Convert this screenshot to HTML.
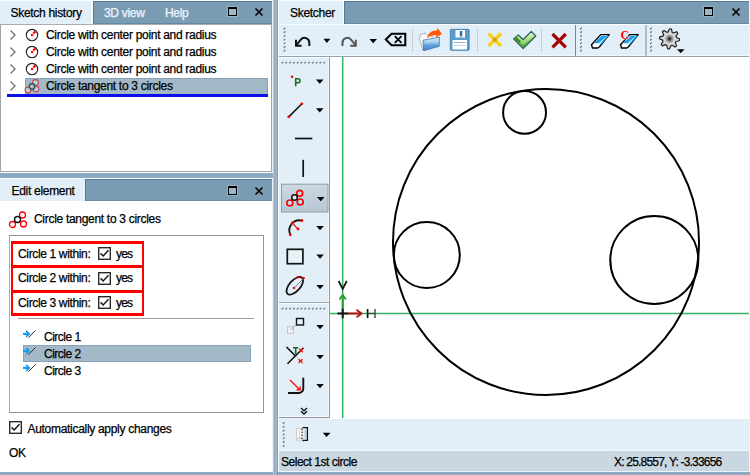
<!DOCTYPE html>
<html><head><meta charset="utf-8">
<style>
*{box-sizing:border-box;margin:0;padding:0}
html,body{width:750px;height:475px;overflow:hidden}
body{background:#8eaac2;font-family:"Liberation Sans",sans-serif;font-size:12px;color:#000;position:relative}
.a{position:absolute}
.t{position:absolute;white-space:nowrap;letter-spacing:-0.3px;line-height:14px;-webkit-text-stroke:0.25px currentColor}
.lt{background:#e3eff8}
.tb{background:#7a9cb3;border-top:1px solid #517b9a;border-bottom:1px solid #6389a6}
.wt{color:#eef4fa}
.dd{position:absolute;width:0;height:0;border-left:4px solid transparent;border-right:4px solid transparent;border-top:4px solid #000}
.grip{position:absolute;background-image:radial-gradient(circle,#7d8894 0.8px,transparent 1.2px)}
</style></head><body>

<!-- ============ LEFT TOP: Sketch history ============ -->
<div class="a" style="left:0;top:0;width:273px;height:1px;background:#fbfdfe"></div>
<div class="a lt" style="left:0;top:1px;width:91px;height:23px"></div>
<div class="a" style="left:91px;top:1px;width:2px;height:23px;background:#fafcfe"></div>
<div class="a tb" style="left:93px;top:1px;width:179px;height:22.5px;border-left:1px solid #517b9a"></div>
<div class="t" style="left:10.5px;top:6px">Sketch history</div>
<div class="t wt" style="left:104px;top:6px">3D view</div>
<div class="t wt" style="left:165px;top:6px">Help</div>
<!-- max / close -->
<div class="a" style="left:228px;top:7px;width:9px;height:9px;border:1.5px solid #000;border-top-width:2.5px;background:#9fb7ca;box-shadow:0 0 0 1px rgba(200,225,240,0.35)"></div>
<svg class="a" style="left:254px;top:7px" width="10" height="10"><path d="M1.5 1.5L8.5 8.5M8.5 1.5L1.5 8.5" stroke="#000" stroke-width="1.6"/></svg>

<div class="a" style="left:0;top:24px;width:272px;height:148px;background:#fff;border:1px solid #a3a3a3;border-top-color:#a9acb0"></div>
<!-- rows -->
<svg class="a" style="left:7.5px;top:29px" width="9" height="12"><path d="M2.5 1.5L7 6L2.5 10.5" fill="none" stroke="#707070" stroke-width="1.3"/></svg>
<svg class="a" style="left:24px;top:27px" width="16" height="16"><circle cx="8" cy="8" r="5.7" fill="none" stroke="#2a2a2a" stroke-width="1.15"/><rect x="7" y="7" width="2.1" height="2.1" fill="#f00"/><path d="M9.3 6.6L11.3 4.5" stroke="#f00" stroke-width="2.2"/></svg>
<div class="t" style="left:46px;top:28px">Circle with center point and radius</div>
<svg class="a" style="left:7.5px;top:46px" width="9" height="12"><path d="M2.5 1.5L7 6L2.5 10.5" fill="none" stroke="#707070" stroke-width="1.3"/></svg>
<svg class="a" style="left:24px;top:44px" width="16" height="16"><circle cx="8" cy="8" r="5.7" fill="none" stroke="#2a2a2a" stroke-width="1.15"/><rect x="7" y="7" width="2.1" height="2.1" fill="#f00"/><path d="M9.3 6.6L11.3 4.5" stroke="#f00" stroke-width="2.2"/></svg>
<div class="t" style="left:46px;top:45px">Circle with center point and radius</div>
<svg class="a" style="left:7.5px;top:63px" width="9" height="12"><path d="M2.5 1.5L7 6L2.5 10.5" fill="none" stroke="#707070" stroke-width="1.3"/></svg>
<svg class="a" style="left:24px;top:61px" width="16" height="16"><circle cx="8" cy="8" r="5.7" fill="none" stroke="#2a2a2a" stroke-width="1.15"/><rect x="7" y="7" width="2.1" height="2.1" fill="#f00"/><path d="M9.3 6.6L11.3 4.5" stroke="#f00" stroke-width="2.2"/></svg>
<div class="t" style="left:46px;top:62px">Circle with center point and radius</div>
<div class="a" style="left:25px;top:78px;width:243px;height:15.5px;background:#a3b9c7;border:1px solid #86a2b9;border-bottom:none"></div>
<div class="a" style="left:6.5px;top:93.5px;width:261.5px;height:3px;background:#0a10e8"></div>
<svg class="a" style="left:7.5px;top:80px" width="9" height="12"><path d="M2.5 1.5L7 6L2.5 10.5" fill="none" stroke="#707070" stroke-width="1.3"/></svg>
<svg class="a" style="left:24px;top:78px" width="16" height="16"><circle cx="11.5" cy="4.5" r="2.9" fill="#b9d3e0" stroke="#c84848" stroke-width="1.1"/><circle cx="4" cy="12" r="2.9" fill="#b9d3e0" stroke="#c84848" stroke-width="1.1"/><circle cx="12" cy="11" r="2.9" fill="#b9d3e0" stroke="#c84848" stroke-width="1.1"/><circle cx="8" cy="8.5" r="2.7" fill="#b8c4cc" stroke="#2d5062" stroke-width="1.4"/></svg>
<div class="t" style="left:46px;top:79px">Circle tangent to 3 circles</div>

<!-- gap -->
<div class="a" style="left:0;top:172px;width:273px;height:1px;background:#fdfeff"></div>

<!-- ============ LEFT BOTTOM: Edit element ============ -->
<div class="a" style="left:0;top:178px;width:273px;height:1px;background:#fdfeff"></div>
<div class="a lt" style="left:0;top:179px;width:85px;height:22px"></div>
<div class="a tb" style="left:85px;top:179px;width:187px;height:22px;border-left:1px solid #517b9a"></div>
<div class="t" style="left:11.5px;top:184px">Edit element</div>
<div class="a" style="left:228px;top:186px;width:9px;height:9px;border:1.5px solid #000;border-top-width:2.5px;background:#9fb7ca;box-shadow:0 0 0 1px rgba(200,225,240,0.35)"></div>
<svg class="a" style="left:254px;top:186px" width="10" height="10"><path d="M1.5 1.5L8.5 8.5M8.5 1.5L1.5 8.5" stroke="#000" stroke-width="1.6"/></svg>
<div class="a" style="left:0;top:201px;width:273px;height:271px;background:#fff"></div>

<svg class="a" style="left:8px;top:209px" width="20" height="20"><circle cx="14.5" cy="6" r="3" fill="#fff" stroke="#f00" stroke-width="1.3"/><circle cx="4.5" cy="15.5" r="3" fill="#fff" stroke="#f00" stroke-width="1.3"/><circle cx="15.5" cy="15" r="3" fill="#fff" stroke="#f00" stroke-width="1.3"/><circle cx="9.5" cy="10.5" r="3" fill="#fff" stroke="#111" stroke-width="1.4"/></svg>
<div class="t" style="left:34px;top:212px">Circle tangent to 3 circles</div>
<div class="a" style="left:9px;top:235px;width:255px;height:178px;border:1px solid #8d949a;border-left-color:#9fb0bc"></div>
<div class="a" style="left:10.5px;top:241px;width:133.5px;height:2.5px;background:#ff0000"></div>
<div class="a" style="left:10.5px;top:265px;width:133.5px;height:3px;background:#ff0000"></div>
<div class="a" style="left:10.5px;top:290px;width:133.5px;height:3px;background:#ff0000"></div>
<div class="a" style="left:10.5px;top:313px;width:133.5px;height:2.5px;background:#ff0000"></div>
<div class="a" style="left:10.5px;top:241px;width:2.2px;height:74.5px;background:#ff0000"></div>
<div class="a" style="left:141.5px;top:241px;width:2.5px;height:74.5px;background:#ff0000"></div>
<div class="t" style="left:18px;top:246.7px;letter-spacing:-0.35px">Circle 1 within:</div>
<svg class="a" style="left:98px;top:247px" width="13" height="13"><rect x="0.7" y="0.7" width="11.6" height="11.6" fill="#fff" stroke="#2a2a2a" stroke-width="1.4"/><path d="M2.6 6.4L5.2 9L10.4 3.2" fill="none" stroke="#1a1a1a" stroke-width="1.5"/></svg>
<div class="t" style="left:116px;top:246.7px;letter-spacing:-0.8px">yes</div>
<div class="t" style="left:18px;top:271.2px;letter-spacing:-0.35px">Circle 2 within:</div>
<svg class="a" style="left:98px;top:271.5px" width="13" height="13"><rect x="0.7" y="0.7" width="11.6" height="11.6" fill="#fff" stroke="#2a2a2a" stroke-width="1.4"/><path d="M2.6 6.4L5.2 9L10.4 3.2" fill="none" stroke="#1a1a1a" stroke-width="1.5"/></svg>
<div class="t" style="left:116px;top:271.2px;letter-spacing:-0.8px">yes</div>
<div class="t" style="left:18px;top:296px;letter-spacing:-0.35px">Circle 3 within:</div>
<svg class="a" style="left:98px;top:296.3px" width="13" height="13"><rect x="0.7" y="0.7" width="11.6" height="11.6" fill="#fff" stroke="#2a2a2a" stroke-width="1.4"/><path d="M2.6 6.4L5.2 9L10.4 3.2" fill="none" stroke="#1a1a1a" stroke-width="1.5"/></svg>
<div class="t" style="left:116px;top:296px;letter-spacing:-0.8px">yes</div>
<div class="a" style="left:18px;top:318px;width:236px;height:1px;background:#a0a0a0"></div>
<div class="a" style="left:23px;top:345.3px;width:227.5px;height:16.7px;background:#a3b9c7;border:1px solid #86a2b9"></div>
<svg class="a" style="left:22px;top:329px" width="15" height="10"><path d="M1 4.9H6.5" stroke="#1e9af0" stroke-width="2.2"/><path d="M4.2 2L7.2 4.9L4.2 7.8" fill="none" stroke="#1e9af0" stroke-width="1.8"/><path d="M6.5 8.7L13.5 1.4" stroke="#333" stroke-width="1"/></svg>
<div class="t" style="left:44px;top:330px;letter-spacing:-0.5px">Circle 1</div>
<svg class="a" style="left:22px;top:346px" width="15" height="10"><path d="M1 4.9H6.5" stroke="#1e9af0" stroke-width="2.2"/><path d="M4.2 2L7.2 4.9L4.2 7.8" fill="none" stroke="#1e9af0" stroke-width="1.8"/><path d="M6.5 8.7L13.5 1.4" stroke="#333" stroke-width="1"/></svg>
<div class="t" style="left:44px;top:347px;letter-spacing:-0.5px">Circle 2</div>
<svg class="a" style="left:22px;top:363px" width="15" height="10"><path d="M1 4.9H6.5" stroke="#1e9af0" stroke-width="2.2"/><path d="M4.2 2L7.2 4.9L4.2 7.8" fill="none" stroke="#1e9af0" stroke-width="1.8"/><path d="M6.5 8.7L13.5 1.4" stroke="#333" stroke-width="1"/></svg>
<div class="t" style="left:44px;top:364px;letter-spacing:-0.5px">Circle 3</div>
<svg class="a" style="left:9px;top:421px" width="13" height="13"><rect x="0.7" y="0.7" width="11.6" height="11.6" fill="#fff" stroke="#2a2a2a" stroke-width="1.4"/><path d="M2.6 6.4L5.2 9L10.4 3.2" fill="none" stroke="#1a1a1a" stroke-width="1.5"/></svg>
<div class="t" style="left:27.5px;top:422px">Automatically apply changes</div>
<div class="t" style="left:9px;top:446px">OK</div>

<!-- ============ RIGHT: Sketcher ============ -->
<div class="a" style="left:272px;top:0;width:1px;height:172px;background:#f0ebe8"></div>
<div class="a" style="left:272px;top:179px;width:1px;height:293px;background:#f4f1ef"></div>
<div class="a" style="left:273px;top:0;width:1px;height:475px;background:#b9cde0"></div>
<div class="a" style="left:274px;top:0;width:1px;height:475px;background:#8aa9c5"></div>
<div class="a" style="left:275px;top:0;width:2px;height:475px;background:#a1b7c7"></div>
<div class="a" style="left:277px;top:0;width:1px;height:475px;background:#7f9db8"></div>
<div class="a" style="left:278px;top:0;width:1px;height:472px;background:#fbfcfd"></div>
<div class="a" style="left:279px;top:0;width:470px;height:1px;background:#fbfdfe"></div>
<div class="a lt" style="left:279px;top:1px;width:64px;height:23px"></div>
<div class="a" style="left:343px;top:1px;width:1.3px;height:23px;background:#fbfdfe"></div>
<div class="a tb" style="left:344.3px;top:1px;width:404.7px;height:22.5px;border-left:1px solid #517b9a"></div>
<div class="t" style="left:290px;top:6px">Sketcher</div>
<div class="a" style="left:704px;top:7px;width:9px;height:9px;border:1.5px solid #000;border-top-width:2.5px;background:#9fb7ca;box-shadow:0 0 0 1px rgba(200,225,240,0.35)"></div>
<svg class="a" style="left:731px;top:7px" width="10" height="10"><path d="M1.5 1.5L8.5 8.5M8.5 1.5L1.5 8.5" stroke="#000" stroke-width="1.6"/></svg>
<div class="a" style="left:279px;top:23.5px;width:470px;height:1.5px;background:#fbfdfe"></div>
<!-- top toolbar -->
<div class="a lt" style="left:279px;top:25px;width:470px;height:32px;border-bottom:1px solid #9aa4ad;box-shadow:inset 0 -1px 0 #f3f7fa"></div>
<!-- vertical toolbar -->
<div class="a lt" style="left:279px;top:57px;width:51px;height:361px;border-top:1px solid #fbfdfe;border-right:1px solid #8f99a3;border-bottom:1px solid #8f99a3;box-shadow:inset -1px -1px 0 #f7fafc"></div>
<!-- canvas -->
<div class="a" style="left:330px;top:57px;width:419px;height:362px;background:#fff"></div>
<!-- bottom toolbar -->
<div class="a lt" style="left:279px;top:418px;width:51px;height:1px;background:#eef4f9"></div><div class="a lt" style="left:279px;top:419px;width:470px;height:32px"></div>
<!-- status -->
<div class="a" style="left:279px;top:451px;width:470px;height:20px;background:#c9d7e2"></div>
<div class="a" style="left:279px;top:470.5px;width:471px;height:1.5px;background:#eef3f7"></div>
<div class="t" style="left:281px;top:455px;letter-spacing:-0.48px">Select 1st circle</div>
<div class="a" style="left:749px;top:0;width:1px;height:472px;background:#f1f5f9"></div>
<div class="a" style="left:279px;top:450.3px;width:470px;height:1.2px;background:#f2f6f9"></div>
<div class="a" style="left:609px;top:452px;width:1px;height:18px;background:#dcd8d8"></div>
<div class="a" style="left:358px;top:452px;width:1px;height:18px;background:#dcd8d8"></div>
<div class="t" style="left:614px;top:455px;letter-spacing:-0.8px">X: 25.8557, Y: -3.33656</div>

<svg class="a" style="left:330px;top:57px" width="419" height="362" viewBox="330 57 419 362">
<line x1="342.7" y1="57" x2="342.7" y2="418" stroke="#35b366" stroke-width="1.5"/>
<line x1="330" y1="313.5" x2="749" y2="313.5" stroke="#35b366" stroke-width="1.5"/>
<g fill="none" stroke="#000" stroke-width="2">
<circle cx="546" cy="242" r="153"/>
<circle cx="524.55" cy="112.4" r="21.45"/>
<circle cx="426.8" cy="255" r="33"/>
<circle cx="654.3" cy="260" r="44"/>
</g>
<line x1="342.7" y1="296" x2="342.7" y2="310" stroke="#1a9e2a" stroke-width="2"/>
<path d="M339.5 299.5L342.7 294.8L345.9 299.5" fill="none" stroke="#1a9e2a" stroke-width="1.8"/>
<path d="M338.6 281L342.7 289L346.8 281" fill="none" stroke="#111" stroke-width="1.7"/>
<line x1="337.5" y1="313.5" x2="348" y2="313.5" stroke="#111" stroke-width="2"/>
<line x1="342.7" y1="308.8" x2="342.7" y2="318.2" stroke="#111" stroke-width="2"/>
<line x1="348" y1="313.5" x2="361" y2="313.5" stroke="#b01515" stroke-width="2"/>
<path d="M356.5 309.8L361.5 313.5L356.5 317.2" fill="none" stroke="#b01515" stroke-width="1.8"/>
<line x1="367.6" y1="309" x2="367.6" y2="318" stroke="#111" stroke-width="1.7"/>
<line x1="375" y1="309" x2="375" y2="318" stroke="#444" stroke-width="1.4"/>
<line x1="367.6" y1="313.5" x2="375" y2="313.5" stroke="#444" stroke-width="1.2"/>
</svg>
<svg class="a" style="left:279px;top:25px" width="470" height="31" viewBox="279 25 470 31">
<path d="M284.05 28.95L284.95 28.05" stroke="#6f7a86" stroke-width="1.3" stroke-linecap="round"/><path d="M284.05 32.65L284.95 31.75" stroke="#6f7a86" stroke-width="1.3" stroke-linecap="round"/><path d="M284.05 36.35L284.95 35.45" stroke="#6f7a86" stroke-width="1.3" stroke-linecap="round"/><path d="M284.05 40.05L284.95 39.15" stroke="#6f7a86" stroke-width="1.3" stroke-linecap="round"/><path d="M284.05 43.75L284.95 42.85" stroke="#6f7a86" stroke-width="1.3" stroke-linecap="round"/><path d="M284.05 47.45L284.95 46.55" stroke="#6f7a86" stroke-width="1.3" stroke-linecap="round"/><path d="M284.05 51.15L284.95 50.25" stroke="#6f7a86" stroke-width="1.3" stroke-linecap="round"/>
<path d="M309.3 46V42.8A4.8 4.8 0 0 0 300.8 39.6L296.5 45" fill="none" stroke="#111" stroke-width="2"/>
<path d="M296 39.8V45.7H301.6" fill="none" stroke="#111" stroke-width="2"/>
<path d="M323.5 38.7H330.3L326.9 42.9Z" fill="#000"/>
<path d="M342.5 46V42.8A4.8 4.8 0 0 1 351 39.6L355.3 45" fill="none" stroke="#555" stroke-width="2"/>
<path d="M355.8 39.8V45.7H350.2" fill="none" stroke="#555" stroke-width="2"/>
<path d="M369.5 39H377L373.2 43.2Z" fill="#000"/>
<path d="M385.8 39.5L391.6 33.8H405.3V45.3H391.6Z" fill="none" stroke="#000" stroke-width="2" stroke-linejoin="miter"/>
<path d="M394.8 36.2L401.5 42.9M401.5 36.2L394.8 42.9" stroke="#000" stroke-width="1.8"/>
<line x1="412.5" y1="29" x2="412.5" y2="52" stroke="#c9ced3" stroke-width="1"/>
<!-- folder -->
<defs><linearGradient id="fg" x1="0" y1="0" x2="0" y2="1"><stop offset="0" stop-color="#d6f0fa"/><stop offset="0.35" stop-color="#a9d2ee"/><stop offset="0.6" stop-color="#5d9fdc"/><stop offset="1" stop-color="#3a86d0"/></linearGradient>
<linearGradient id="sg" x1="0" y1="0" x2="0" y2="1"><stop offset="0" stop-color="#d8f5b8"/><stop offset="0.4" stop-color="#8fd45a"/><stop offset="1" stop-color="#3a9e2a"/></linearGradient></defs>
<path d="M422.8 50L419.3 38.2L420.6 34.3L425.6 33.3L427.8 35.6L432 35L432 40Z" fill="#f6f9fc" stroke="#6a7580" stroke-width="0.8" stroke-dasharray="1.2 0.8"/>
<path d="M423 40.2L439.6 37.2L439.2 46.3L423.6 50.8Z" fill="url(#fg)" stroke="#2f6aa8" stroke-width="0.7"/>
<path d="M427.3 38.3C428.2 33.2 431.2 30.6 436.8 30.6L437.6 28L441.9 34L436 37.8L436.3 35C432.2 35 429.6 36.2 427.3 38.3Z" fill="#ff5a0a"/>
<!-- save -->
<rect x="450.3" y="29.3" width="18.8" height="21" rx="1" fill="#5b9ccc" stroke="#3a80b5" stroke-width="0.9"/>
<rect x="455.5" y="30" width="9.5" height="7.5" fill="#fff"/>
<rect x="459.8" y="31" width="2.5" height="5.5" fill="#2d6ea8"/>
<rect x="452.5" y="40" width="14.5" height="9.5" fill="#fff"/>
<line x1="454" y1="42.5" x2="465.5" y2="42.5" stroke="#8dbbe0" stroke-width="1"/>
<line x1="454" y1="45.5" x2="465.5" y2="45.5" stroke="#c5d9ea" stroke-width="1"/>
<line x1="477.5" y1="29" x2="477.5" y2="52" stroke="#c9ced3" stroke-width="1"/>
<!-- yellow x -->
<path d="M488.5 33.5L501 46M501 33.5L488.5 46" stroke="#f5d21c" stroke-width="3.6"/>
<circle cx="494.8" cy="39.8" r="2.2" fill="#e39a1a"/>
<!-- check -->
<path d="M513.5 38.8L518.3 34.8L523.2 39.5L531.3 31.3L535.8 36L523.2 48.6Z" fill="url(#sg)" stroke="#2f5866" stroke-width="1.1" stroke-linejoin="round"/>
<path d="M515 38.8L518.3 36.2L523.2 41L531.3 32.8L534 35.8L523.2 44.5Z" fill="#ffffff" opacity="0.35"/>
<path d="M514.5 39L517 37L521 41.5L519.5 43Z" fill="#157a15" opacity="0.8"/>
<line x1="541.5" y1="29" x2="541.5" y2="52" stroke="#c9ced3" stroke-width="1"/>
<!-- red x -->
<path d="M552.5 34L565.8 47.3M565.8 34L552.5 47.3" stroke="#a60000" stroke-width="3.2"/>
<line x1="575.5" y1="25" x2="575.5" y2="56" stroke="#7f8890" stroke-width="1"/>
<path d="M580.55 28.95L581.45 28.05" stroke="#6f7a86" stroke-width="1.3" stroke-linecap="round"/><path d="M580.55 32.65L581.45 31.75" stroke="#6f7a86" stroke-width="1.3" stroke-linecap="round"/><path d="M580.55 36.35L581.45 35.45" stroke="#6f7a86" stroke-width="1.3" stroke-linecap="round"/><path d="M580.55 40.05L581.45 39.15" stroke="#6f7a86" stroke-width="1.3" stroke-linecap="round"/><path d="M580.55 43.75L581.45 42.85" stroke="#6f7a86" stroke-width="1.3" stroke-linecap="round"/><path d="M580.55 47.45L581.45 46.55" stroke="#6f7a86" stroke-width="1.3" stroke-linecap="round"/><path d="M580.55 51.15L581.45 50.25" stroke="#6f7a86" stroke-width="1.3" stroke-linecap="round"/>
<!-- eraser 1 -->
<path d="M591.5 44.8L600.8 34.6H609.2L599.5 46.8L597.8 48H592.5Z" fill="#fff" stroke="#000" stroke-width="1.4" stroke-linejoin="round"/>
<path d="M593.8 43.2L601.8 35.8H607L598.8 43.2Z" fill="#1aa0ea"/>
<path d="M600.2 44.6L608.2 35.6" stroke="#1aa0ea" stroke-width="1.4"/>
<!-- eraser 2 -->
<path d="M620.5 44.8L629.8 34.6H638.2L628.5 46.8L626.8 48H621.5Z" fill="#fff" stroke="#000" stroke-width="1.4" stroke-linejoin="round"/>
<path d="M622.8 43.2L630.8 35.8H636L627.8 43.2Z" fill="#1aa0ea"/>
<path d="M629.2 44.6L637.2 35.6" stroke="#1aa0ea" stroke-width="1.4"/>

<text x="620.6" y="39.3" font-family="Liberation Serif" font-weight="bold" font-size="12" fill="#f00" stroke="#fff" stroke-width="0.6" paint-order="stroke">C</text>
<line x1="646" y1="25" x2="646" y2="56" stroke="#7f8890" stroke-width="1"/>
<path d="M650.55 28.95L651.45 28.05" stroke="#6f7a86" stroke-width="1.3" stroke-linecap="round"/><path d="M650.55 32.65L651.45 31.75" stroke="#6f7a86" stroke-width="1.3" stroke-linecap="round"/><path d="M650.55 36.35L651.45 35.45" stroke="#6f7a86" stroke-width="1.3" stroke-linecap="round"/><path d="M650.55 40.05L651.45 39.15" stroke="#6f7a86" stroke-width="1.3" stroke-linecap="round"/><path d="M650.55 43.75L651.45 42.85" stroke="#6f7a86" stroke-width="1.3" stroke-linecap="round"/><path d="M650.55 47.45L651.45 46.55" stroke="#6f7a86" stroke-width="1.3" stroke-linecap="round"/><path d="M650.55 51.15L651.45 50.25" stroke="#6f7a86" stroke-width="1.3" stroke-linecap="round"/>
<path d="M669.50 28.80L671.45 28.99L672.18 32.33L673.39 32.98L676.57 31.73L677.81 33.24L675.97 36.12L676.37 37.43L679.50 38.80L679.31 40.75L675.97 41.48L675.32 42.69L676.57 45.87L675.06 47.11L672.18 45.27L670.87 45.67L669.50 48.80L667.55 48.61L666.82 45.27L665.61 44.62L662.43 45.87L661.19 44.36L663.03 41.48L662.63 40.17L659.50 38.80L659.69 36.85L663.03 36.12L663.68 34.91L662.43 31.73L663.94 30.49L666.82 32.33L668.13 31.93Z" fill="#d8d8d8" stroke="#222" stroke-width="1.2" stroke-linejoin="round"/>
<circle cx="669.5" cy="38.8" r="4" fill="#9a9a9a"/>
<circle cx="669.5" cy="38.8" r="2" fill="#3a3a3a"/>
<path d="M677 49.2H684.5L680.7 53.2Z" fill="#000"/>
</svg>
<svg class="a" style="left:279px;top:56px" width="51" height="395" viewBox="279 56 51 395">
<path d="M282.05 63.05L282.95 62.15" stroke="#6f7a86" stroke-width="1.3" stroke-linecap="round"/><path d="M285.85 63.05L286.75 62.15" stroke="#6f7a86" stroke-width="1.3" stroke-linecap="round"/><path d="M289.65 63.05L290.55 62.15" stroke="#6f7a86" stroke-width="1.3" stroke-linecap="round"/><path d="M293.45 63.05L294.35 62.15" stroke="#6f7a86" stroke-width="1.3" stroke-linecap="round"/><path d="M297.25 63.05L298.15 62.15" stroke="#6f7a86" stroke-width="1.3" stroke-linecap="round"/><path d="M301.05 63.05L301.95 62.15" stroke="#6f7a86" stroke-width="1.3" stroke-linecap="round"/><path d="M304.85 63.05L305.75 62.15" stroke="#6f7a86" stroke-width="1.3" stroke-linecap="round"/><path d="M308.65 63.05L309.55 62.15" stroke="#6f7a86" stroke-width="1.3" stroke-linecap="round"/><path d="M312.45 63.05L313.35 62.15" stroke="#6f7a86" stroke-width="1.3" stroke-linecap="round"/><path d="M316.25 63.05L317.15 62.15" stroke="#6f7a86" stroke-width="1.3" stroke-linecap="round"/><path d="M320.05 63.05L320.95 62.15" stroke="#6f7a86" stroke-width="1.3" stroke-linecap="round"/><path d="M323.85 63.05L324.75 62.15" stroke="#6f7a86" stroke-width="1.3" stroke-linecap="round"/>
<circle cx="292.1" cy="76.8" r="1.3" fill="#f00"/>
<path d="M295.7 86.3V78.8H298A2 2 0 0 1 298 82.8H295.7" fill="none" stroke="#1b701b" stroke-width="1.6"/>
<path d="M316 79.5H323.5L319.75 83.7Z" fill="#000"/>
<line x1="282" y1="96.5" x2="327" y2="96.5" stroke="#dbe4ec" stroke-width="0.8" stroke-dasharray="2 2.5"/>
<line x1="289" y1="116.6" x2="301.6" y2="104" stroke="#111" stroke-width="1.5"/>
<circle cx="288.7" cy="116.8" r="1.4" fill="#f00"/><circle cx="301.9" cy="103.8" r="1.4" fill="#f00"/>
<path d="M316 108.3H323.5L319.75 112.5Z" fill="#000"/>
<line x1="295" y1="138.5" x2="312.3" y2="138.5" stroke="#111" stroke-width="1.7"/>
<line x1="303.2" y1="159.8" x2="303.2" y2="177" stroke="#111" stroke-width="1.7"/>
<!-- selected button -->
<defs><linearGradient id="bg1" x1="0" y1="0" x2="0" y2="1"><stop offset="0" stop-color="#cdd9e3"/><stop offset="1" stop-color="#b6c6d3"/></linearGradient></defs>
<rect x="281.5" y="184.2" width="46.5" height="27.8" fill="url(#bg1)" stroke="#8f9ba6" stroke-width="1"/>
<g fill="none" stroke="#9ff0f8" stroke-width="3.4"><circle cx="299.7" cy="193.3" r="3"/><circle cx="289.8" cy="203" r="3"/><circle cx="300.2" cy="202" r="3"/></g>
<circle cx="299.7" cy="193.3" r="3" fill="#b7dfe8" stroke="#f00" stroke-width="1.7"/>
<circle cx="289.8" cy="203" r="3" fill="#b7dfe8" stroke="#f00" stroke-width="1.7"/>
<circle cx="300.2" cy="202" r="3" fill="#b7dfe8" stroke="#f00" stroke-width="1.7"/>
<circle cx="294.5" cy="197.5" r="2.8" fill="#e8eef2" stroke="#111" stroke-width="1.5"/>
<path d="M317 197H324.5L320.75 201.2Z" fill="#000"/>
<!-- arc -->
<path d="M290.3 234.5A10 10 0 0 1 301.8 220.6" fill="none" stroke="#111" stroke-width="1.8"/>
<circle cx="290.3" cy="234.8" r="1.4" fill="#f00"/><circle cx="301.9" cy="220.5" r="1.5" fill="#f00"/><circle cx="298" cy="229" r="1.4" fill="#f00"/>
<path d="M298 229L291.8 222.6M291.5 225.5V222.4H294.6" fill="none" stroke="#f00" stroke-width="1.1"/>
<path d="M316.3 226H323.8L320.05 230.2Z" fill="#000"/>
<rect x="287.3" y="249.3" width="15.6" height="14.4" fill="#e8f1f8" stroke="#111" stroke-width="1.7"/>
<path d="M316.3 254.5H323.8L320.05 258.7Z" fill="#000"/>
<!-- ellipse -->
<ellipse cx="294.8" cy="285.8" rx="10.8" ry="5.4" transform="rotate(-48 294.8 285.8)" fill="none" stroke="#111" stroke-width="1.7"/>
<line x1="294" y1="288" x2="303" y2="279" stroke="#666" stroke-width="0.8"/>
<circle cx="297.8" cy="277.3" r="1.3" fill="#f00"/><circle cx="303.6" cy="278" r="1.3" fill="#f00"/><circle cx="294" cy="288" r="1.3" fill="#f00"/>
<path d="M316.3 285H323.8L320.05 289.2Z" fill="#000"/>
<line x1="279" y1="302.5" x2="329" y2="302.5" stroke="#9ea9b3" stroke-width="1"/>
<line x1="279" y1="303.5" x2="329" y2="303.5" stroke="#f5f8fb" stroke-width="1"/>
<path d="M282.05 309.05L282.95 308.15" stroke="#6f7a86" stroke-width="1.3" stroke-linecap="round"/><path d="M285.85 309.05L286.75 308.15" stroke="#6f7a86" stroke-width="1.3" stroke-linecap="round"/><path d="M289.65 309.05L290.55 308.15" stroke="#6f7a86" stroke-width="1.3" stroke-linecap="round"/><path d="M293.45 309.05L294.35 308.15" stroke="#6f7a86" stroke-width="1.3" stroke-linecap="round"/><path d="M297.25 309.05L298.15 308.15" stroke="#6f7a86" stroke-width="1.3" stroke-linecap="round"/><path d="M301.05 309.05L301.95 308.15" stroke="#6f7a86" stroke-width="1.3" stroke-linecap="round"/><path d="M304.85 309.05L305.75 308.15" stroke="#6f7a86" stroke-width="1.3" stroke-linecap="round"/><path d="M308.65 309.05L309.55 308.15" stroke="#6f7a86" stroke-width="1.3" stroke-linecap="round"/><path d="M312.45 309.05L313.35 308.15" stroke="#6f7a86" stroke-width="1.3" stroke-linecap="round"/><path d="M316.25 309.05L317.15 308.15" stroke="#6f7a86" stroke-width="1.3" stroke-linecap="round"/><path d="M320.05 309.05L320.95 308.15" stroke="#6f7a86" stroke-width="1.3" stroke-linecap="round"/><path d="M323.85 309.05L324.75 308.15" stroke="#6f7a86" stroke-width="1.3" stroke-linecap="round"/>
<!-- move -->
<rect x="296.5" y="318.5" width="7" height="6.5" fill="#e8f1f8" stroke="#111" stroke-width="1.4"/>
<rect x="287.5" y="326.8" width="6" height="6.5" fill="#eef4f9" stroke="#c4c4c4" stroke-width="1"/>
<line x1="290.5" y1="330" x2="296.3" y2="324.3" stroke="#777" stroke-width="0.9" stroke-dasharray="1.5 0.8"/>
<path d="M316.3 325H323.8L320.05 329.2Z" fill="#000"/>
<!-- trim -->
<line x1="286.5" y1="347" x2="296" y2="356.5" stroke="#111" stroke-width="1.6"/>
<line x1="287.5" y1="363.8" x2="303.5" y2="347.8" stroke="#111" stroke-width="1.6"/>
<line x1="296" y1="356.5" x2="303.5" y2="364" stroke="#aaa" stroke-width="1" stroke-dasharray="1.2 1"/>
<path d="M293 347.8H298.3M295.7 347.8V354" stroke="#186e18" stroke-width="1.6"/>
<path d="M299.2 348.6L302.8 352.2M302.8 348.6L299.2 352.2" stroke="#f00" stroke-width="1.3"/>
<path d="M298.6 359.2L302.4 362.8M302.4 359.2L298.6 362.8" stroke="#f00" stroke-width="1.3"/>
<path d="M316.3 355H323.8L320.05 359.2Z" fill="#000"/>
<!-- fillet -->
<path d="M303.3 377.8V388.5A4.5 4.5 0 0 1 298.8 393H288" fill="none" stroke="#111" stroke-width="1.9"/>
<path d="M290 380L300 390M296.5 389.8H300.2V386.2" fill="none" stroke="#f00" stroke-width="1.2"/>
<path d="M316.3 384H323.8L320.05 388.2Z" fill="#000"/>
<path d="M301 408L304 410.8L307 408M301 411.3L304 414.1L307 411.3" fill="none" stroke="#111" stroke-width="1.3"/>
<!-- bottom toolbar -->
<path d="M283.25 423.45L284.15 422.55" stroke="#6f7a86" stroke-width="1.3" stroke-linecap="round"/><path d="M283.25 427.25L284.15 426.35" stroke="#6f7a86" stroke-width="1.3" stroke-linecap="round"/><path d="M283.25 431.05L284.15 430.15" stroke="#6f7a86" stroke-width="1.3" stroke-linecap="round"/><path d="M283.25 434.85L284.15 433.95" stroke="#6f7a86" stroke-width="1.3" stroke-linecap="round"/><path d="M283.25 438.65L284.15 437.75" stroke="#6f7a86" stroke-width="1.3" stroke-linecap="round"/><path d="M283.25 442.45L284.15 441.55" stroke="#6f7a86" stroke-width="1.3" stroke-linecap="round"/><path d="M283.25 446.25L284.15 445.35" stroke="#6f7a86" stroke-width="1.3" stroke-linecap="round"/>
<rect x="296.5" y="428.3" width="5.5" height="11.8" fill="#fbfbfb" stroke="#c9c2ba" stroke-width="0.8"/>
<line x1="299.3" y1="429" x2="299.3" y2="438" stroke="#c8c8c8" stroke-width="0.8"/>
<path d="M296.8 439L299 437.8L301 438.8" fill="none" stroke="#aaa" stroke-width="0.8"/>
<path d="M302.5 427.7H307.4V440.4H303.2V441.3" fill="none" stroke="#111" stroke-width="1.3"/>
<line x1="305.2" y1="430" x2="305.2" y2="438.5" stroke="#a9b6c4" stroke-width="0.9"/>
<circle cx="302" cy="429.3" r="0.8" fill="#333"/><circle cx="302" cy="432.3" r="0.8" fill="#555"/><circle cx="302" cy="435.3" r="0.8" fill="#444"/><circle cx="302" cy="438.3" r="0.8" fill="#333"/>
<path d="M322.8 432.8H330.3L326.55 437.0Z" fill="#000"/>
</svg>

</body></html>
